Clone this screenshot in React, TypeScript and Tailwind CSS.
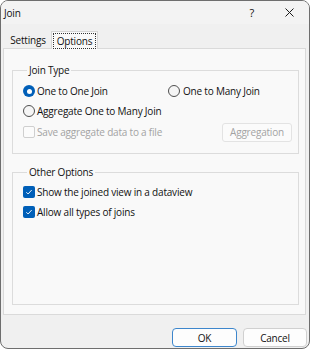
import React from "react";

function Radio({ checked }: { checked?: boolean }) {
  return checked ? (
    <span className="flex h-[12px] w-[12px] items-center justify-center rounded-full bg-[#005fb8]">
      <span className="h-[5px] w-[5px] rounded-full bg-white" />
    </span>
  ) : (
    <span className="h-[12px] w-[12px] rounded-full border border-[#4f4f4f] bg-[#f5f5f5]" />
  );
}

function Check({ checked, disabled }: { checked?: boolean; disabled?: boolean }) {
  if (checked)
    return (
      <span className="flex h-[12px] w-[12px] items-center justify-center rounded-[2px] bg-[#005fb8]">
        <svg width="8" height="8" viewBox="0 0 8 8">
          <path d="M1.3 4.2 L3.1 6 L6.7 2" fill="none" stroke="white" strokeWidth="0.9" />
        </svg>
      </span>
    );
  return (
    <span
      className={
        disabled
          ? "h-[12px] w-[12px] rounded-[2px] border border-[#cfcfcf] bg-[#fbfbfb]"
          : "h-[12px] w-[12px] rounded-[2px] border border-[#5c5c5c] bg-white"
      }
    />
  );
}

export default function App() {
  return (
    <div
      className="flex h-[349px] w-[310px] flex-col overflow-hidden rounded-[8px] border border-[#6e6e6e] bg-[#f0f0f0] text-[10px] leading-[14px] tracking-[-0.2px] text-[#111]"
      style={{ fontFamily: '"Open Sans", "Noto Sans", sans-serif' }}
    >
      {/* Title bar */}
      <div className="flex h-[23px] shrink-0 items-center bg-[#f3f3f3] pl-[3px]">
        <span>Join</span>
        <span className="ml-auto mr-[31px] text-[11px]">?</span>
        <svg width="9" height="9" viewBox="0 0 9 9" className="mr-[15px]">
          <path d="M0.5 0.5 L8.5 8.5 M8.5 0.5 L0.5 8.5" stroke="#1a1a1a" strokeWidth="1" />
        </svg>
      </div>

      {/* Tabs */}
      <div className="mt-[6px] flex h-[18px] shrink-0 items-end pl-[4px]">
        <div className="flex h-[15px] w-[46px] items-center justify-center pb-[1px]">Settings</div>
        <div className="relative z-10 -mb-px flex h-[18px] w-[47px] items-center justify-center border border-b-0 border-[#d6d6d6] bg-[#f9f9f9] px-[1px]">
          <span className="flex h-[16px] w-full items-center justify-center border border-dotted border-[#333]">
            Options
          </span>
        </div>
      </div>

      {/* Panel */}
      <div className="ml-[2px] flex h-[267px] w-[303px] shrink-0 flex-col border border-[#dadada] bg-[#f9f9f9] px-[8px] pt-[13px] pb-[9px]">
        <fieldset className="w-[287px] border border-[#dcdcdc] pl-[10px] pr-[6px] pb-[11px]">
          <legend className="ml-[4px] px-[2px] leading-[16px]">Join Type</legend>
          <div className="mt-[3px] flex h-[20px] items-center">
            <label className="flex w-[145px] items-center gap-[2px]">
              <Radio checked />
              <span>One to One Join</span>
            </label>
            <label className="flex items-center gap-[3px]">
              <Radio />
              <span>One to Many Join</span>
            </label>
          </div>
          <div className="flex h-[20px] items-center">
            <label className="flex items-center gap-[2px]">
              <Radio />
              <span>Aggregate One to Many Join</span>
            </label>
          </div>
          <div className="mt-[1px] flex h-[20px] items-center justify-between">
            <label className="flex items-center gap-[2px] text-[#a3a3a3]">
              <Check disabled />
              <span>Save aggregate data to a file</span>
            </label>
            <button className="flex h-[19px] w-[70px] items-center justify-center rounded-[3px] border border-[#e3e3e3] bg-[#fbfbfb] text-[#a3a3a3]">
              Aggregation
            </button>
          </div>
        </fieldset>

        <fieldset className="mt-[10px] w-[287px] flex-1 border border-[#dcdcdc] pl-[10px] pr-[6px]">
          <legend className="ml-[4px] px-[2px] leading-[16px]">Other Options</legend>
          <div className="mt-[2px] flex h-[20px] items-center">
            <label className="flex items-center gap-[2px]">
              <Check checked />
              <span>Show the joined view in a dataview</span>
            </label>
          </div>
          <div className="flex h-[20px] items-center">
            <label className="flex items-center gap-[2px]">
              <Check checked />
              <span>Allow all types of joins</span>
            </label>
          </div>
        </fieldset>
      </div>

      {/* Buttons */}
      <div className="mt-[13px] flex justify-end gap-[6px] pr-[2px]">
        <button className="flex h-[19px] w-[65px] items-center justify-center rounded-[4px] border border-[#3d86cc] bg-[#fdfdfd]">
          OK
        </button>
        <button className="flex h-[19px] w-[64px] items-center justify-center rounded-[4px] border border-[#d0d0d0] bg-[#fdfdfd]">
          Cancel
        </button>
      </div>
    </div>
  );
}
